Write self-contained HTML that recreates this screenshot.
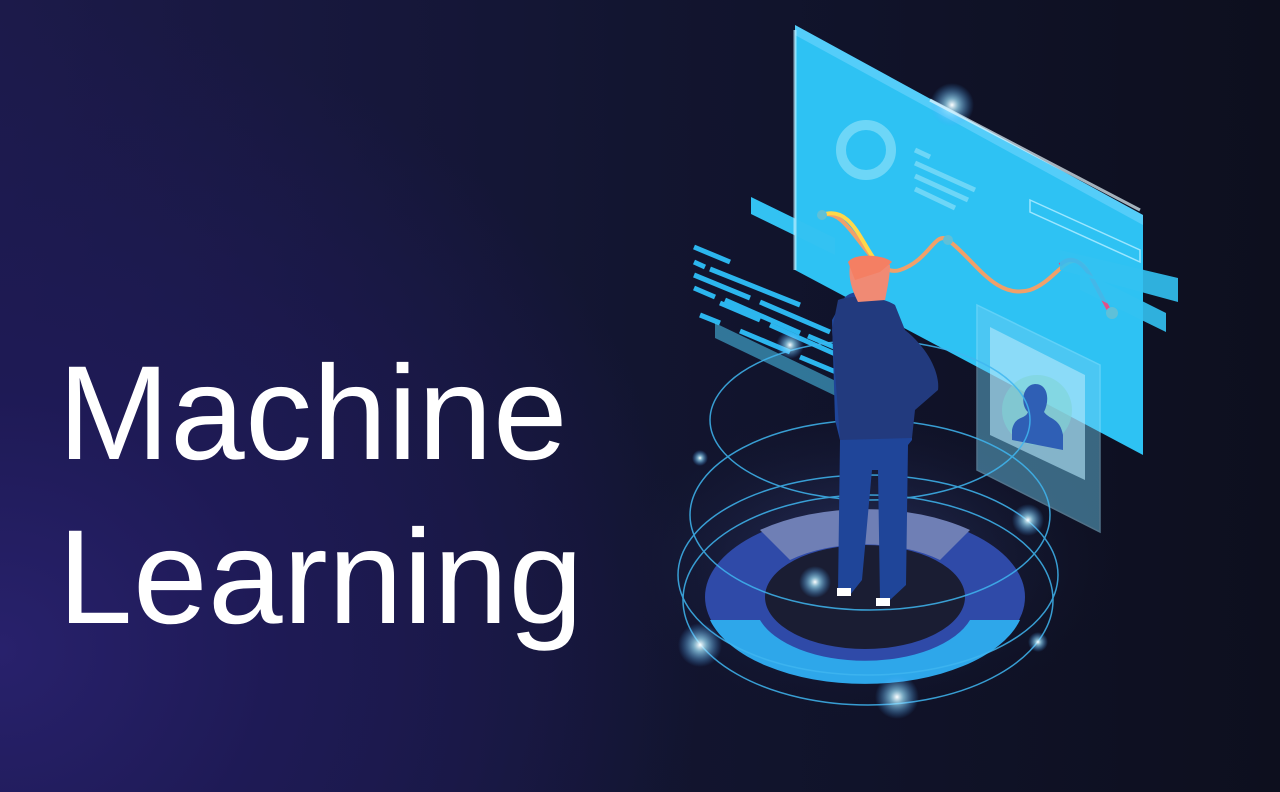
<!DOCTYPE html>
<html><head><meta charset="utf-8"><style>
html,body{margin:0;padding:0;width:1280px;height:792px;overflow:hidden}
body{background:radial-gradient(ellipse 700px 650px at 0px 650px,#28216c 0%,#1e1a55 40%,rgba(20,20,45,0) 100%),linear-gradient(90deg,#1c1a4a 0%,#121530 50%,#0d0f1e 100%);position:relative;font-family:"Liberation Sans",sans-serif}
.t{position:absolute;left:58px;color:#fff;font-size:134px;line-height:1;letter-spacing:0.5px}
</style></head><body>
<div class="t" style="top:347px">Machine</div>
<div class="t" style="top:511px">Learning</div>
<svg width="1280" height="792" style="position:absolute;left:0;top:0">
<defs>
<radialGradient id="g"><stop offset="0" stop-color="#fff"/><stop offset=".3" stop-color="#9fe4ff" stop-opacity=".7"/><stop offset="1" stop-color="#3aa0ff" stop-opacity="0"/></radialGradient>
<radialGradient id="floor"><stop offset="0" stop-color="#3a4a8a" stop-opacity=".6"/><stop offset="1" stop-color="#111428" stop-opacity="0"/></radialGradient>
</defs>
<ellipse cx="860" cy="560" rx="260" ry="160" fill="url(#floor)"/>
<polygon points="795,25 1143,215 1143,455 795,270" fill="#2ec2f3"/>
<polygon points="795,25 1143,215 1143,225 795,35" fill="#7ad8ff" opacity=".5"/>
<circle cx="866" cy="150" r="25" fill="none" stroke="#6dd6f7" stroke-width="10"/>
<g stroke="#6dd6f7" stroke-width="5"><line x1="915" y1="150" x2="930" y2="157"/><line x1="915" y1="163" x2="975" y2="190"/><line x1="915" y1="176" x2="968" y2="200"/><line x1="915" y1="189" x2="955" y2="208"/></g>
<polygon points="1030,200 1140,250 1140,262 1030,212" fill="none" stroke="#9be6ff" stroke-width="1.5"/>
<path d="M822,215 C850,205 870,280 900,270 C930,260 935,230 948,240 C975,260 995,300 1030,290 C1060,280 1070,240 1090,275 L1110,312" fill="none" stroke="#f0a06a" stroke-width="4"/>
<path d="M822,215 C850,205 860,240 875,260" fill="none" stroke="#ffd84a" stroke-width="4"/>
<path d="M1060,265 C1070,255 1080,260 1090,275 L1110,312" fill="none" stroke="#e0508a" stroke-width="4"/>
<circle cx="822" cy="215" r="5" fill="#5fc0d8"/><circle cx="948" cy="240" r="5" fill="#5fc0d8"/><circle cx="1112" cy="313" r="6" fill="#5fc0d8"/>
<polygon points="751,197 835,238 835,255 751,214" fill="#33c2f2"/>
<polygon points="1060,250 1178,278 1178,302 1060,270" fill="#33c2f2" opacity=".9"/>
<polygon points="1080,270 1166,313 1166,332 1080,290" fill="#33c2f2" opacity=".9"/>
<polygon points="977,305 1100,365 1100,532 977,470" fill="#6fcff3" opacity=".45" stroke="#9ee4ff" stroke-width="1.5"/>
<polygon points="990,327 1085,375 1085,480 990,435" fill="#b5e8fb" opacity=".6"/>
<circle cx="1037" cy="410" r="35" fill="#7fd4d6" opacity=".6"/>
<path d="M1012,430 C1015,415 1025,420 1028,412 C1020,405 1022,385 1035,384 C1048,384 1050,400 1044,412 C1050,420 1060,418 1063,435 L1063,450 L1012,440 Z" fill="#2f5fb5"/>
<g stroke="#2cb6ee" stroke-width="5">
<line x1="694" y1="247" x2="730" y2="262"/>
<line x1="694" y1="262" x2="705" y2="267"/><line x1="710" y1="269" x2="800" y2="305"/>
<line x1="694" y1="275" x2="750" y2="298"/><line x1="760" y1="302" x2="830" y2="332"/>
<line x1="694" y1="288" x2="715" y2="297"/><line x1="725" y1="300" x2="800" y2="333"/><line x1="808" y1="336" x2="860" y2="358"/>
<line x1="720" y1="303" x2="760" y2="320"/><line x1="770" y1="325" x2="860" y2="365"/>
<line x1="700" y1="315" x2="720" y2="323"/><line x1="740" y1="331" x2="790" y2="352"/><line x1="800" y1="357" x2="860" y2="382"/>
</g>
<polygon points="715,323 865,395 865,410 715,338" fill="#4cc6f3" opacity=".55"/>
<ellipse cx="865" cy="597" rx="160" ry="85" fill="#2f4aa8"/>
<path d="M710,620 A160,85 0 0 0 1020,620 L970,620 A110,58 0 0 1 760,620 Z" fill="#2ea7ea"/>
<path d="M760,530 A160,85 0 0 1 970,530 L940,560 A110,58 0 0 0 790,560 Z" fill="#6f7fb5"/>
<ellipse cx="865" cy="597" rx="100" ry="52" fill="#1a1d33"/>
<g fill="none" stroke="#3fb6f0" stroke-width="1.5" opacity=".85">
<ellipse cx="870" cy="420" rx="160" ry="80"/>
<ellipse cx="870" cy="515" rx="180" ry="95"/>
<ellipse cx="868" cy="575" rx="190" ry="100"/>
<ellipse cx="868" cy="600" rx="185" ry="105"/>
</g>
<path d="M843,300 C848,290 870,288 882,300 L905,345 C915,360 935,370 938,385 C935,395 920,405 912,410 L912,440 L908,445 L906,585 L890,600 L880,600 L878,470 L872,470 L862,580 L850,595 L838,592 L840,440 L835,420 L832,320 Z" fill="#1f4599"/>
<path d="M838,300 C850,295 880,295 895,305 L905,330 C930,350 940,375 938,390 L915,410 L912,438 L840,440 L832,330 Z" fill="#223a7e"/>
<path d="M850,265 C855,255 880,255 890,265 C890,275 888,285 885,300 L858,302 C852,290 848,278 850,265 Z" fill="#f08a74"/>
<path d="M848,262 C855,252 885,255 892,262 L880,272 L855,280 Z" fill="#f47f63"/>
<rect x="837" y="588" width="14" height="8" fill="#fff"/><rect x="876" y="598" width="14" height="8" fill="#fff"/>
<g fill="url(#g)">
<circle cx="952" cy="105" r="22"/><circle cx="790" cy="345" r="14"/><circle cx="1028" cy="520" r="16"/>
<circle cx="700" cy="645" r="22"/><circle cx="897" cy="697" r="22"/><circle cx="815" cy="582" r="16"/>
<circle cx="1038" cy="642" r="10"/><circle cx="700" cy="458" r="8"/>
</g>
<line x1="795" y1="30" x2="795" y2="270" stroke="#bdefff" stroke-width="3" opacity=".7"/>
<line x1="930" y1="100" x2="1140" y2="210" stroke="#e6f8ff" stroke-width="3" opacity=".7"/>
</svg>
</body></html>
